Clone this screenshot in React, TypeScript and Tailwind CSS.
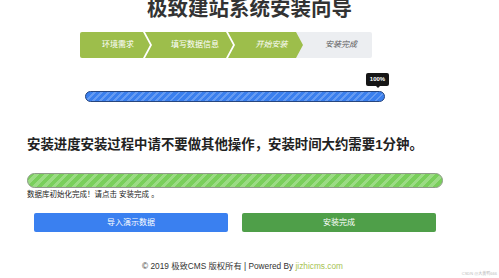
const font = { fontFamily: '"Liberation Sans", "Noto Sans CJK SC", sans-serif' };

const blueStripes =
  "bg-[#3a7fee] bg-[image:repeating-linear-gradient(-45deg,rgba(255,255,255,0.22)_0_2px,transparent_2px_5px)]";
const greenStripes =
  "bg-[#79cf5b] bg-[image:repeating-linear-gradient(-45deg,rgba(255,255,255,0.25)_0_3px,transparent_3px_7px)]";

const StepBar = () => (
  <div className="ml-[80px] flex h-[26px] w-[292px]">
    <div className="relative z-30 flex h-full w-[70px] items-center justify-center rounded-l-[2px] bg-[#9dbe4b] pl-[6px] text-[8px] text-white [clip-path:polygon(0_0,63px_0,100%_50%,63px_100%,0_100%)]">
      环境需求
    </div>
    <div className="relative z-20 -ml-[5px] flex h-full w-[88px] items-center justify-center bg-[#9dbe4b] pl-[12px] text-[8px] text-white [clip-path:polygon(0_0,81px_0,100%_50%,81px_100%,0_100%,7px_50%)]">
      填写数据信息
    </div>
    <div className="relative z-10 -ml-[5px] flex h-full w-[75px] items-center justify-center bg-[#9dbe4b] pl-[12px] text-[8px] italic text-white [clip-path:polygon(0_0,68px_0,100%_50%,68px_100%,0_100%,7px_50%)]">
      开始安装
    </div>
    <div className="-ml-[7px] flex h-full w-[76px] items-center justify-center rounded-r-[2px] bg-[#eceef1] pl-[14px] text-[8px] italic text-[#555]">
      安装完成
    </div>
  </div>
);

export default function App() {
  return (
    <div className="relative h-[278px] w-[499px] overflow-hidden bg-white text-[#222]" style={font}>
      <div className="flex h-[18px] items-end justify-center text-[20.5px] font-bold leading-[18px] text-[#333]">
        极致建站系统安装向导
      </div>

      <div className="mt-[14px]">
        <StepBar />
      </div>

      <div className="relative ml-[85px] mt-[33px] w-[300px]">
        <div className={`h-[11px] w-full rounded-full border border-[#27467e] ${blueStripes}`} />
        <div className="absolute -right-[4px] -top-[18px] flex h-[13px] w-[23px] items-center justify-center rounded-[2px] bg-[#161616] text-[6px] font-bold text-white">
          100%
          <span className="absolute -bottom-[2px] left-1/2 h-0 w-0 -translate-x-1/2 border-x-[2px] border-t-[2px] border-x-transparent border-t-[#161616]" />
        </div>
      </div>

      <div className="ml-[27px] mt-[35px] h-[16px] text-[13.4px] font-bold leading-[16px] text-[#222]">
        安装进度安装过程中请不要做其他操作，安装时间大约需要1分钟。
      </div>

      <div className={`ml-[27px] mt-[20px] h-[15px] w-[416px] rounded-full border border-[#8f9a8a] ${greenStripes}`} />

      <div className="ml-[27px] mt-[2px] h-[10px] text-[7.5px] leading-[10px] text-[#222]">
        数据库初始化完成！请点击 安装完成 。
      </div>

      <div className="ml-[34px] mt-[13px] flex gap-[14px]">
        <button className="flex h-[19px] w-[194px] items-center justify-center rounded-[2px] bg-[#3a80f0] text-[8px] text-white">
          导入演示数据
        </button>
        <button className="flex h-[19px] w-[194px] items-center justify-center rounded-[2px] bg-[#4f9f49] text-[8px] text-white">
          安装完成
        </button>
      </div>

      <div className="mt-[29px] flex h-[10px] justify-center pr-[14px] text-[8.3px] leading-[10px] text-[#333]">
        © 2019 极致CMS 版权所有 | Powered By&nbsp;<span className="text-[#a6c251]">jizhicms.com</span>
      </div>

      <div className="absolute bottom-[1px] right-[2px] text-[4px] text-[#bbb]">CSDN @大黄鸭666</div>
    </div>
  );
}
